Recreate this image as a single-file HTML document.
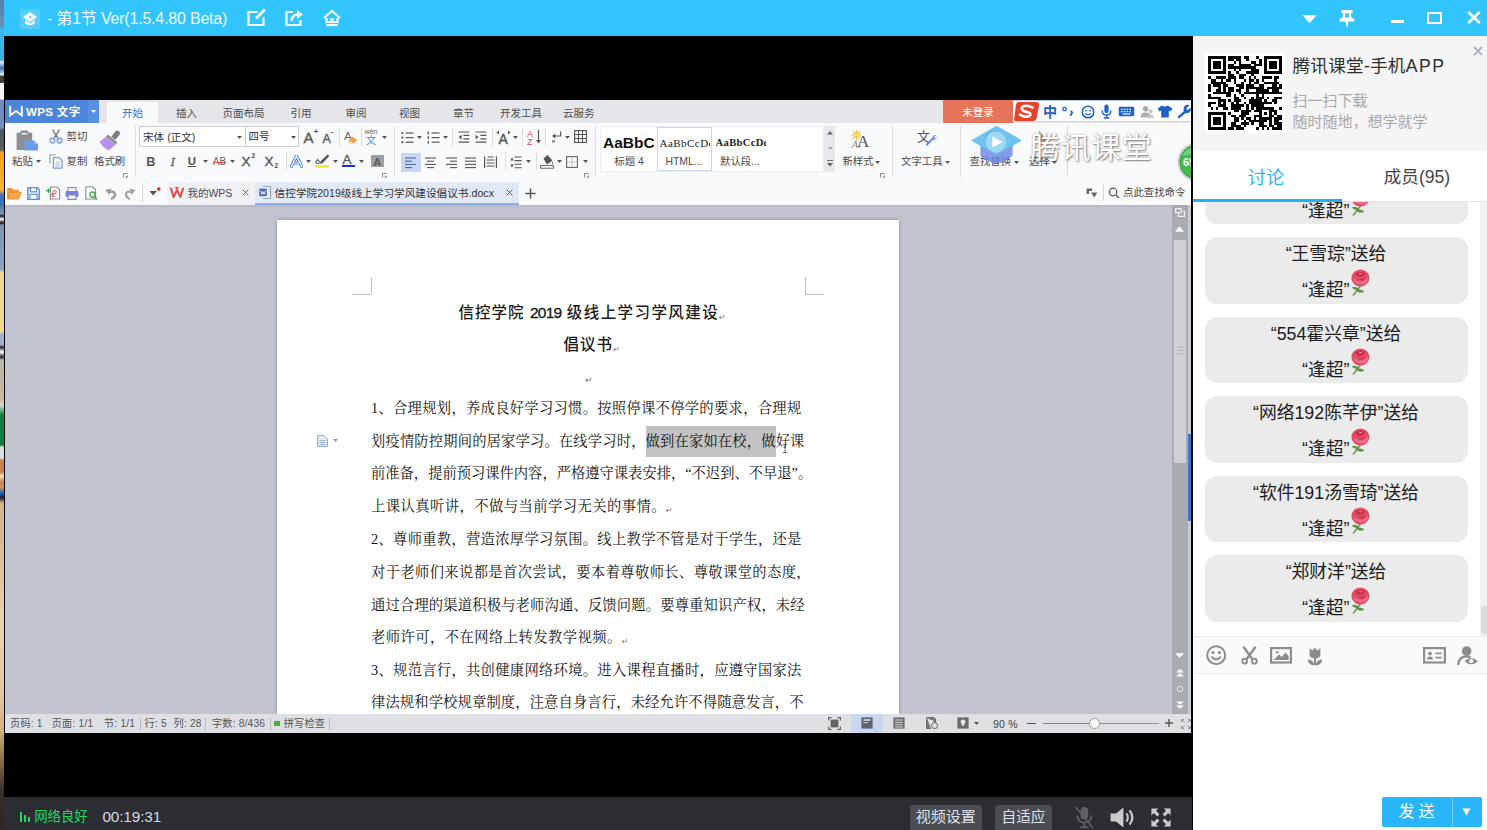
<!DOCTYPE html>
<html lang="zh-CN">
<head>
<meta charset="utf-8">
<title>腾讯课堂</title>
<style>
*{box-sizing:border-box;margin:0;padding:0}
html,body{width:1487px;height:830px;overflow:hidden;background:#000}
body{font-family:"Liberation Sans","Noto Sans CJK SC",sans-serif;position:relative;color:#333}
.abs{position:absolute}
#app{position:absolute;left:0;top:0;width:1487px;height:830px;overflow:hidden;background:#000}
/* left desktop sliver */
#sliver{left:0;top:0;width:4px;height:830px;background:linear-gradient(to bottom,
 #5b7ea8 0,#6a8fb8 27px,#36b8ee 28px,#36b4ea 60px,#e8eef6 62px,#3b6fb8 68px,#e8eef6 75px,#3a3f38 76px,#3a3f38 83px,#f4f4f4 83px,#f4f4f4 99px,
 #6f8fc4 100px,#6f8fc4 128px,#4a5560 130px,#59605f 150px,#f2a21a 152px,#f6b32a 190px,#3a72c0 195px,#3a72c0 205px,#5f7ea8 207px,#7c93b4 214px,#111 216px,#fff 219px,#111 223px,#7c93b4 225px,
 #8ea4c4 270px,#f0d98a 272px,#f0d98a 332px,#9fb0cc 334px,#9fb0cc 345px,#223 347px,#fff 352px,#223 357px,#b9b5b0 360px,#cdb89a 400px,#d9d9d9 405px,#0d7f45 415px,#0d7f45 445px,#ddd 447px,#ddd 458px,#c9824a 460px,#c9824a 472px,#f3e2c0 476px,#c9824a 482px,#c8905a 488px,#1d6fd0 492px,#223 498px,#d7b48a 503px,
 #d9bf98 560px,#e8d3ae 620px,#e2c9a2 690px,#d2b184 730px,#8a6d4c 760px,#3a3028 790px,#2a2622 830px)}
/* top bar */
#topbar{left:4px;top:0;width:1483px;height:36px;background:#31c5fb}
/* black video bg */
#stage{left:4px;top:36px;width:1188px;height:761px;background:#000}
#ctrl{left:4px;top:797px;width:1187.5px;height:33px;background:#2b2d33}
/* right panel */
#side{left:1192.5px;top:36px;width:294.5px;height:794px;background:#fff}
/* wps */
#wps{left:5px;top:100px;width:1186px;height:633px;background:#c3c5cf;overflow:hidden}

#msgs{left:0;top:165px;width:294px;height:436px;overflow:hidden}
.msg{position:absolute;left:12px;width:263px;height:66.5px;background:#ebebeb;border-radius:12px;text-align:center;font-size:17.8px;color:#1c1c1c;white-space:nowrap}
.msg .l1{position:absolute;left:0;width:100%;top:4px;line-height:26px}
.msg .l2{position:absolute;left:0;width:100%;top:40px;line-height:26px}
.rose{display:inline-block;vertical-align:top;margin-top:-8.4px;margin-left:0.5px}

.ttl{font-family:"Liberation Sans","Noto Sans CJK SC",sans-serif;font-weight:500;font-size:15.5px;line-height:24px;color:#1a1a1a;white-space:nowrap;letter-spacing:1.05px}
.ttl .dg{font-weight:400;letter-spacing:-0.75px;-webkit-text-stroke:0.35px #1a1a1a}
.dl{font-family:"Liberation Serif","Noto Serif CJK SC",serif;font-size:14.3px;line-height:24px;color:#151515;white-space:nowrap}
.pm{font-family:"DejaVu Sans",sans-serif;font-size:8px;color:#777;font-weight:normal;vertical-align:-2px;letter-spacing:0;display:inline-block;width:0}
</style>
</head>
<body>
<div id="app">
<div id="sliver" class="abs"></div>
<div id="topbar" class="abs">
<div class="abs" style="left:16px;top:9px;width:20px;height:20px;background:#55cdf8"></div>
<svg class="abs" style="left:17px;top:10px" width="18" height="18" viewBox="0 0 18 18"><path d="M9 2 L16 7 L9 12 L2 7Z" fill="#fff"/><path d="M4.2 10 L9 13.6 L13.8 10 L13.8 13.2 Q9 17.5 4.2 13.2Z" fill="#fff"/><path d="M9 5.2 Q11.2 7 9 8.8 Q7.6 7 9 5.2Z" fill="#31c5fb"/></svg>
<div class="abs" style="left:43px;top:8px;font-size:16px;line-height:22px;color:#eefaff;white-space:nowrap;letter-spacing:-0.2px">- 第1节 Ver(1.5.4.80 Beta)</div>
<svg class="abs" style="left:242px;top:8px" width="22" height="20" viewBox="0 0 22 20" fill="none" stroke="#f2fbff" stroke-width="2.2"><path d="M12 4 H2.5 V17 H17.5 V9"/><path d="M19 1.5 L10 10.5" stroke-width="2.8"/></svg>
<svg class="abs" style="left:280px;top:8px" width="22" height="20" viewBox="0 0 22 20" fill="none" stroke="#f2fbff" stroke-width="2.2"><path d="M9 4 H2.5 V17 H16.5 V12"/><path d="M7.5 13 Q8 6.5 14 6.5" stroke-width="2.4"/><path d="M13 2 L19 6.5 L13 11Z" fill="#f2fbff" stroke="none"/></svg>
<svg class="abs" style="left:318px;top:8px" width="22" height="20" viewBox="0 0 22 20" fill="none" stroke="#f2fbff" stroke-width="2.2"><path d="M2 10 L10 3 L18 10"/><path d="M4.5 10 V14 H15.5 V10"/><path d="M4 17 H16" /><path d="M8 11.5 H12"/></svg>
<svg class="abs" style="left:1298px;top:15px" width="15" height="9" viewBox="0 0 15 9"><path d="M0.5 0.3 H14.5 L7.5 8.2Z" fill="#fff"/></svg>
<svg class="abs" style="left:1335px;top:9px" width="16" height="20" viewBox="0 0 16 20" fill="#fff"><path d="M2.4 1 H13.6 V4 H12 L12.4 8.6 L15.4 10 V12.6 H9.4 L8 19.4 L6.6 12.6 H0.6 V10 L3.6 8.6 L4 4 H2.4Z"/><path d="M6.4 4.2 H9.6 L10 8.6 H6Z" fill="#31c5fb"/></svg>
<div class="abs" style="left:1386.5px;top:20.2px;width:13px;height:3.3px;background:#fff"></div>
<div class="abs" style="left:1423px;top:12px;width:15px;height:12px;border:2.5px solid #fff"></div>
<svg class="abs" style="left:1463px;top:11px" width="14" height="13" viewBox="0 0 14 13" stroke="#fff" stroke-width="2.6" fill="none"><path d="M1.2 1 L12.8 12 M12.8 1 L1.2 12"/></svg>
</div>
<div id="stage" class="abs"></div>
<div id="wps" class="abs">
<!--DOC-->
<div class="abs" style="left:0px;top:105px;width:1186px;height:509px;background:#c2c5cf"></div>
<div class="abs" style="left:0px;top:105px;width:1186px;height:3px;background:linear-gradient(#b4b7c2,#c2c5cf)"></div>
<div class="abs" style="left:272px;top:119.5px;width:622px;height:495px;background:#fff;box-shadow:0 0 4px rgba(90,95,110,0.55)"></div>
<div class="abs" style="left:347.3px;top:193.6px;width:19px;height:1px;background:#bdbdbd"></div>
<div class="abs" style="left:365.6px;top:176.8px;width:1px;height:17.6px;background:#bdbdbd"></div>
<div class="abs" style="left:800px;top:193.6px;width:19px;height:1px;background:#bdbdbd"></div>
<div class="abs" style="left:800px;top:176.8px;width:1px;height:17.6px;background:#bdbdbd"></div>
<div class="abs" style="left:641.2px;top:326.3px;width:129.5px;height:31.2px;background:#c3c3c3"></div>
<div class="abs ttl" style="left:453.4px;top:200.8px">信控学院 <span class="dg">2019</span> <span style="letter-spacing:1.42px">级线上学习学风建设</span><span class="pm">↵</span></div>
<div class="abs ttl" style="left:558.5px;top:232.7px">倡议书<span class="pm">↵</span></div>
<div class="abs" style="left:580px;top:272px;font-size:9px;line-height:16px;color:#777">↵</div>
<div class="abs dl" style="left:366.0px;top:296px;letter-spacing:0.291px">1、合理规划，养成良好学习习惯。按照停课不停学的要求，合理规</div>
<div class="abs dl" style="left:366.0px;top:329px;letter-spacing:0.155px">划疫情防控期间的居家学习。在线学习时，做到在家如在校，做好课</div>
<div class="abs dl" style="left:366.0px;top:361px;letter-spacing:-0.013px">前准备，提前预习课件内容，严格遵守课表安排，“不迟到、不早退”。</div>
<div class="abs dl" style="left:366.0px;top:394px;letter-spacing:0.45px">上课认真听讲，不做与当前学习无关的事情。<span class="pm">↵</span></div>
<div class="abs dl" style="left:366.0px;top:427.3px;letter-spacing:0.298px">2、尊师重教，营造浓厚学习氛围。线上教学不管是对于学生，还是</div>
<div class="abs dl" style="left:366.0px;top:460.4px;letter-spacing:0.369px">对于老师们来说都是首次尝试，要本着尊敬师长、尊敬课堂的态度，</div>
<div class="abs dl" style="left:366.0px;top:492.8px;letter-spacing:0.162px">通过合理的渠道积极与老师沟通、反馈问题。要尊重知识产权，未经</div>
<div class="abs dl" style="left:366.0px;top:524.8px;letter-spacing:0.45px">老师许可，不在网络上转发教学视频。<span class="pm">↵</span></div>
<div class="abs dl" style="left:366.0px;top:558px;letter-spacing:0.298px">3、规范言行，共创健康网络环境。进入课程直播时，应遵守国家法</div>
<div class="abs dl" style="left:366.0px;top:590.3px;letter-spacing:0.127px">律法规和学校规章制度，注意自身言行，未经允许不得随意发言，不</div>
<svg class="abs" style="left:312px;top:334.6px" width="11" height="12" viewBox="0 0 11 12"><path d="M0.6 0.6 H7 L10.4 4 V11.4 H0.6Z" fill="#e8eef8" stroke="#8fa4cc" stroke-width="1"/><path d="M2.4 5.4 H8.4 M2.4 7.4 H8.4 M2.4 9.4 H8.4" stroke="#8fa4cc" stroke-width="0.9"/></svg>
<svg class="abs" style="left:328px;top:339.4px" width="5" height="3" viewBox="0 0 5 3"><path d="M0 0 H5 L2.5 3Z" fill="#999"/></svg>
<svg class="abs" style="left:777px;top:343.6px" width="6" height="9" viewBox="0 0 6 9"><path d="M1 0.5 H5 M3 0.5 V8.5 M1 8.5 H5" stroke="#555" stroke-width="0.9" fill="none"/></svg>
<div class="abs" style="left:1167.2px;top:105px;width:15.8px;height:509px;background:#a9abb3"></div>
<div class="abs" style="left:1183px;top:105px;width:3px;height:509px;background:#c9cbd3"></div>
<div class="abs" style="left:1183px;top:333.6px;width:3px;height:87.2px;background:#3d78d0"></div>
<div class="abs" style="left:1169.3px;top:139.8px;width:11.8px;height:223.2px;background:#d0d1d6"></div>
<svg class="abs" style="left:1171.6px;top:245.6px" width="7" height="9" viewBox="0 0 7 9"><path d="M0 1 H7 M0 4.4 H7 M0 7.8 H7" stroke="#b2b4bc" stroke-width="1"/></svg>
<svg class="abs" style="left:1169.6px;top:108px" width="10" height="9" viewBox="0 0 10 9"><path d="M0.6 0.6 H6 V4.6 H0.6Z M6 3 H9.4 V8.4 H3.4 V4.6" fill="none" stroke="#eee" stroke-width="1.2"/></svg>
<svg class="abs" style="left:1170.4px;top:126px" width="9" height="6" viewBox="0 0 9 6"><path d="M0 5.8 H9 L4.5 0.2Z" fill="#fff"/></svg>
<svg class="abs" style="left:1170.4px;top:553.4px" width="9" height="5" viewBox="0 0 9 5"><path d="M0 0.2 H9 L4.5 4.8Z" fill="#fff"/></svg>
<svg class="abs" style="left:1171px;top:568.6px" width="8" height="8" viewBox="0 0 8 8"><path d="M0 3.4 H8 L4 0Z M0 7.4 H8 L4 4Z" fill="#fff"/></svg>
<svg class="abs" style="left:1171px;top:585px" width="8" height="8" viewBox="0 0 8 8"><circle cx="4" cy="4" r="2.8" fill="none" stroke="#f2f2f2" stroke-width="0.9"/></svg>
<svg class="abs" style="left:1171px;top:601px" width="8" height="8" viewBox="0 0 8 8"><path d="M0 0.4 H8 L4 3.8Z M0 4.4 H8 L4 7.8Z" fill="#fff"/></svg>
<div class="abs" style="left:0px;top:613.7px;width:1186px;height:19.3px;background:#dfe0e4"></div>
<div class="abs" style="left:5px;top:616.4px;font-size:10.2px;line-height:16px;color:#555;white-space:nowrap;letter-spacing:0.2px;">页码: 1</div>
<div class="abs" style="left:46.7px;top:616.4px;font-size:10.2px;line-height:16px;color:#555;white-space:nowrap;letter-spacing:0.2px;">页面: 1/1</div>
<div class="abs" style="left:99px;top:616.4px;font-size:10.2px;line-height:16px;color:#555;white-space:nowrap;letter-spacing:0.2px;">节: 1/1</div>
<div class="abs" style="left:139.5px;top:616.4px;font-size:10.2px;line-height:16px;color:#555;white-space:nowrap;letter-spacing:0.2px;">行: 5</div>
<div class="abs" style="left:168.5px;top:616.4px;font-size:10.2px;line-height:16px;color:#555;white-space:nowrap;letter-spacing:0.2px;">列: 28</div>
<div class="abs" style="left:206.9px;top:616.4px;font-size:10.2px;line-height:16px;color:#555;white-space:nowrap;letter-spacing:0.2px;">字数: 8/436</div>
<div class="abs" style="left:278.7px;top:616.4px;font-size:10.2px;line-height:16px;color:#555;white-space:nowrap;letter-spacing:0.2px;">拼写检查</div>
<div class="abs" style="left:135px;top:617.6px;width:1px;height:12px;background:#b8bac0"></div>
<div class="abs" style="left:200.4px;top:617.6px;width:1px;height:12px;background:#b8bac0"></div>
<div class="abs" style="left:264.6px;top:617.6px;width:1px;height:12px;background:#b8bac0"></div>
<div class="abs" style="left:324px;top:617.6px;width:1px;height:12px;background:#b8bac0"></div>
<div class="abs" style="left:269.4px;top:620.6px;width:5.6px;height:5.6px;background:#4cae3e"></div>
<svg class="abs" style="left:823px;top:617px" width="13" height="13" viewBox="0 0 13 13"><path d="M0.6 3.6 V0.6 H3.6 M9.4 0.6 H12.4 V3.6 M12.4 9.4 V12.4 H9.4 M3.6 12.4 H0.6 V9.4" fill="none" stroke="#666" stroke-width="1.2"/><rect x="2.6" y="2.6" width="7.8" height="7.8" fill="#666"/></svg>
<div class="abs" style="left:846px;top:613.7px;width:32.4px;height:19.3px;background:#c9d8f0"></div>
<svg class="abs" style="left:856px;top:617.4px" width="12" height="12" viewBox="0 0 12 12"><rect x="0.4" y="0.4" width="11.2" height="11.2" fill="#5d6470"/><path d="M2.4 3 H9.6" stroke="#fff" stroke-width="1.2"/><path d="M2.4 5.6 H7" stroke="#c8ccd4" stroke-width="1"/></svg>
<svg class="abs" style="left:888.3px;top:617.4px" width="12" height="12" viewBox="0 0 12 12"><rect x="0.4" y="0.4" width="11.2" height="11.2" fill="#6b6b6b"/><path d="M2.2 3 H9.8 M2.2 5.4 H9.8 M2.2 7.8 H9.8 M2.2 10 H9.8" stroke="#e4e4e4" stroke-width="0.9"/></svg>
<svg class="abs" style="left:921px;top:617.4px" width="12" height="12" viewBox="0 0 12 12"><path d="M0.6 0.6 H8 L9.6 2.2 V6 M0.6 0.6 V11.4 H5" fill="#777" stroke="#666" stroke-width="1"/><path d="M2.4 3.4 H7.4" stroke="#e4e4e4" stroke-width="0.9"/><circle cx="8.6" cy="8.6" r="3" fill="#dfe0e4" stroke="#666" stroke-width="1"/></svg>
<svg class="abs" style="left:952.4px;top:617.4px" width="12" height="12" viewBox="0 0 12 12"><rect x="0.4" y="0.4" width="11.2" height="11.2" fill="#6b6b6b"/><path d="M6 2.4 Q8.6 2.6 8.4 5 Q8.2 6.4 7.2 7.2 V8.8 H4.8 V7.2 Q3.8 6.4 3.6 5 Q3.4 2.6 6 2.4Z" fill="#e8e8e8"/></svg>
<svg class="abs" style="left:968.6px;top:622.4px" width="5" height="3" viewBox="0 0 5 3"><path d="M0 0 H5 L2.5 3Z" fill="#555"/></svg>
<div class="abs" style="left:988px;top:616.2px;font-size:10.6px;line-height:16px;color:#444;white-space:nowrap;letter-spacing:0.2px;">90 %</div>
<div class="abs" style="left:1022.3px;top:622.8px;width:8.6px;height:1.4px;background:#555"></div>
<div class="abs" style="left:1038px;top:622.7px;width:52px;height:1.6px;background:#4b8ae6"></div>
<div class="abs" style="left:1090px;top:622.9px;width:64px;height:1.2px;background:#8e9097"></div>
<div class="abs" style="left:1084px;top:617.9px;width:11.2px;height:11.2px;background:#fdfdfd;border:1px solid #9a9ca4;border-radius:50%"></div>
<svg class="abs" style="left:1160px;top:619.4px" width="8" height="8" viewBox="0 0 8 8"><path d="M4 0 V8 M0 4 H8" stroke="#555" stroke-width="1.4"/></svg>
<svg class="abs" style="left:1176px;top:619px" width="10" height="10" viewBox="0 0 10 10"><path d="M0.6 3 V0.6 H3 M7 0.6 H9.4 V3 M9.4 7 V9.4 H7 M3 9.4 H0.6 V7 M1 1 L3.6 3.6 M9 1 L6.4 3.6 M9 9 L6.4 6.4 M1 9 L3.6 6.4" fill="none" stroke="#888" stroke-width="0.9"/></svg>
<!--/DOC-->
<!--CHROME-->
<div class="abs" style="left:0px;top:0px;width:1186px;height:22.5px;background:#e4e6ea"></div>
<div class="abs" style="left:0px;top:0px;width:94px;height:22.5px;background:#4c86dc"></div>
<div class="abs" style="left:83px;top:0px;width:11px;height:22.5px;background:#5a90e0"></div>
<svg class="abs" style="left:4px;top:5px" width="14" height="12" viewBox="0 0 14 12" ><path d="M1.2 1 L1.2 10.4 L7 6 L12.8 10.4 L12.8 1" fill="none" stroke="#fff" stroke-width="1.9" stroke-linejoin="miter"/></svg>
<div class="abs" style="left:21px;top:3.8px;font-size:11.6px;line-height:16px;color:#fff;white-space:nowrap;font-weight:bold;letter-spacing:0.3px;">WPS 文字</div>
<svg class="abs" style="left:86.0px;top:9.5px" width="5" height="3" viewBox="0 0 5 3" ><path d="M0 0 H5 L2.5 3Z" fill="#fff"/></svg>
<div class="abs" style="left:102px;top:1.5px;width:50.5px;height:21px;background:#f9fafb"></div>
<div class="abs" style="left:67.6px;top:4.8px;font-size:10.5px;line-height:16px;color:#2f6fd0;white-space:nowrap;;width:120px;text-align:center;">开始</div>
<div class="abs" style="left:121.6px;top:4.8px;font-size:10.5px;line-height:16px;color:#4d4d4d;white-space:nowrap;;width:120px;text-align:center;">插入</div>
<div class="abs" style="left:178.6px;top:4.8px;font-size:10.5px;line-height:16px;color:#4d4d4d;white-space:nowrap;;width:120px;text-align:center;">页面布局</div>
<div class="abs" style="left:236px;top:4.8px;font-size:10.5px;line-height:16px;color:#4d4d4d;white-space:nowrap;;width:120px;text-align:center;">引用</div>
<div class="abs" style="left:291px;top:4.8px;font-size:10.5px;line-height:16px;color:#4d4d4d;white-space:nowrap;;width:120px;text-align:center;">审阅</div>
<div class="abs" style="left:344.5px;top:4.8px;font-size:10.5px;line-height:16px;color:#4d4d4d;white-space:nowrap;;width:120px;text-align:center;">视图</div>
<div class="abs" style="left:398.6px;top:4.8px;font-size:10.5px;line-height:16px;color:#4d4d4d;white-space:nowrap;;width:120px;text-align:center;">章节</div>
<div class="abs" style="left:456px;top:4.8px;font-size:10.5px;line-height:16px;color:#4d4d4d;white-space:nowrap;;width:120px;text-align:center;">开发工具</div>
<div class="abs" style="left:513.8px;top:4.8px;font-size:10.5px;line-height:16px;color:#4d4d4d;white-space:nowrap;;width:120px;text-align:center;">云服务</div>
<div class="abs" style="left:938px;top:0px;width:70px;height:22.5px;background:#e5745a"></div>
<div class="abs" style="left:913px;top:4.3px;font-size:10.5px;line-height:16px;color:#fff;white-space:nowrap;;width:120px;text-align:center;">未登录</div>
<div class="abs" style="left:1007.5px;top:0px;width:178.5px;height:22px;background:#fdfdfd;border-top:1px solid #bcd0ea;border-bottom:1px solid #c9d3e2"></div>
<svg class="abs" style="left:1008.5px;top:0px" width="26" height="22" viewBox="0 0 26 22" ><path d="M4 2 H22 Q26 2 25 6 L22.6 18 Q22 21 18.6 21 H1.6 Q-0.6 21 0.4 17.6 L2 5 Q2.4 2 4 2Z" fill="#e8402a"/><path d="M18.6 7.6 Q13 4.4 8.8 6.6 Q6 8.8 9.6 11 L15 12.8 Q17.6 14 15.6 15.8 Q11.4 18 6 14.6" fill="none" stroke="#fff" stroke-width="2.6" stroke-linecap="round"/></svg>
<div class="abs" style="left:985px;top:3.8px;font-size:14px;line-height:16px;color:#1f62c6;white-space:nowrap;font-weight:bold;width:120px;text-align:center;">中</div>
<svg class="abs" style="left:1057px;top:6px" width="12" height="10" viewBox="0 0 12 10" ><circle cx="2.6" cy="3" r="1.7" fill="none" stroke="#1f62c6" stroke-width="1.3"/><path d="M8.4 5.4 Q10.6 5.4 9.8 7.6 L8.2 9.6" fill="none" stroke="#1f62c6" stroke-width="1.8"/></svg>
<svg class="abs" style="left:1075.5px;top:4.5px" width="14" height="14" viewBox="0 0 14 14" ><circle cx="7" cy="7" r="5.8" fill="none" stroke="#1f62c6" stroke-width="1.5"/><circle cx="4.9" cy="5.6" r="0.9" fill="#1f62c6"/><circle cx="9.1" cy="5.6" r="0.9" fill="#1f62c6"/><path d="M4.2 8.4 Q7 11.4 9.8 8.4" fill="none" stroke="#1f62c6" stroke-width="1.3"/></svg>
<svg class="abs" style="left:1096px;top:4px" width="11" height="15" viewBox="0 0 11 15" ><rect x="3.4" y="0.6" width="4.2" height="8.4" rx="2.1" fill="#1f62c6"/><path d="M1.2 6.4 Q1.2 11 5.5 11 Q9.8 11 9.8 6.4 M5.5 11 V13.6 M2.8 14 H8.2" fill="none" stroke="#1f62c6" stroke-width="1.4"/></svg>
<svg class="abs" style="left:1113px;top:6px" width="17" height="11" viewBox="0 0 17 11" ><rect x="0.8" y="0.8" width="15.4" height="9.4" rx="1.4" fill="#1f62c6"/><path d="M3 3.4 H14 M3 5.6 H14" stroke="#fff" stroke-width="1.1" stroke-dasharray="1.6 1.2"/><path d="M4.6 8 H12.4" stroke="#fff" stroke-width="1.1"/></svg>
<svg class="abs" style="left:1135px;top:4.5px" width="14" height="14" viewBox="0 0 14 14" ><circle cx="5.6" cy="3.8" r="2.8" fill="#a9adb3"/><path d="M0.6 12.6 Q0.6 7.4 5.6 7.4 Q10.4 7.4 10.4 12.6Z" fill="#a9adb3"/><circle cx="10.6" cy="6.6" r="2" fill="#c2c5ca"/><path d="M7.4 13 Q7.4 9.4 10.6 9.4 Q13.8 9.4 13.8 13Z" fill="#c2c5ca"/></svg>
<svg class="abs" style="left:1152px;top:5px" width="16" height="13" viewBox="0 0 16 13" ><path d="M5 0.6 Q8 2.8 11 0.6 L15.4 3.6 L13.4 6.6 L11.8 5.6 V12.4 H4.2 V5.6 L2.6 6.6 L0.6 3.6Z" fill="#1f62c6"/></svg>
<svg class="abs" style="left:1172px;top:4px" width="14" height="15" viewBox="0 0 14 15" ><path d="M12.6 1 Q8 -0.4 6.6 4 Q6.2 6 7 7 L1 12.4 Q0.2 14 2 14.6 L8.6 9 Q11.6 9.8 13.4 7.2 Q14.4 5.4 13.6 3.6 L11 6.2 L9.2 4.6 Z" fill="#1f62c6"/></svg>
<div class="abs" style="left:0px;top:22.5px;width:1186px;height:58px;background:#f9fafb"></div>
<div class="abs" style="left:0px;top:80.5px;width:1186px;height:24.5px;background:#f9fafb"></div>
<svg class="abs" style="left:10.5px;top:29.5px" width="23" height="21" viewBox="0 0 23 21" ><rect x="0.6" y="2.6" width="15.6" height="17.4" rx="1.2" fill="#8f8f8f"/><rect x="4.6" y="0.4" width="7.6" height="4.4" rx="1" fill="#8f8f8f"/><rect x="5.6" y="3" width="5.6" height="1.4" fill="#f9fafb"/><path d="M8.4 10.4 H18.6 L22 13.8 V20.6 H8.4Z" fill="#6b9ce8"/><path d="M18.6 10.4 V13.8 H22Z" fill="#c3d7f6"/></svg>
<div class="abs" style="left:7px;top:54.1px;font-size:10.4px;line-height:16px;color:#4a4a4a;white-space:nowrap;;">粘贴</div>
<svg class="abs" style="left:31.1px;top:60.1px" width="5" height="3" viewBox="0 0 5 3" ><path d="M0 0 H5 L2.5 3Z" fill="#555"/></svg>
<svg class="abs" style="left:43.5px;top:28.5px" width="14" height="15" viewBox="0 0 14 15" ><path d="M3.4 0.6 L9.4 10 M10.6 0.6 L4.6 10" stroke="#7c7c7c" stroke-width="1.5" fill="none"/><circle cx="3.4" cy="11.6" r="2.4" fill="none" stroke="#7a9be0" stroke-width="1.4"/><circle cx="10.6" cy="11.6" r="2.4" fill="none" stroke="#7a9be0" stroke-width="1.4"/></svg>
<div class="abs" style="left:61.6px;top:29.1px;font-size:10.4px;line-height:16px;color:#4a4a4a;white-space:nowrap;;">剪切</div>
<svg class="abs" style="left:43.5px;top:53.5px" width="14" height="15" viewBox="0 0 14 15" ><path d="M1 9.6 V1 H7" fill="none" stroke="#9a9a9a" stroke-width="1.2"/><path d="M4.4 3.6 H10 L13 6.6 V14.2 H4.4Z" fill="#fff" stroke="#6b9ce8" stroke-width="1.2"/><path d="M6.4 8 H11 M6.4 10 H11 M6.4 12 H11" stroke="#8fb3ee" stroke-width="0.9"/></svg>
<div class="abs" style="left:61.6px;top:54.1px;font-size:10.4px;line-height:16px;color:#4a4a4a;white-space:nowrap;;">复制</div>
<svg class="abs" style="left:94px;top:29.5px" width="22" height="21" viewBox="0 0 22 21" ><path d="M12.4 6.4 L16.6 1.2 Q18.4 -0.2 20.2 1.4 Q21.8 3.2 20.4 5 L16.2 10Z" fill="#7d7d7d"/><path d="M9 4.4 L18.4 12.4 L16.4 14.6 L7 6.6Z" fill="#8c8c8c"/><path d="M7 6.8 L16.4 14.8 L9.8 20.6 Q3.8 17.6 0.4 11.8Z" fill="#b692ec"/></svg>
<div class="abs" style="left:89px;top:54.1px;font-size:10.4px;line-height:16px;color:#4a4a4a;white-space:nowrap;;">格式刷</div>
<svg class="abs" style="left:117.5px;top:73px" width="5" height="5" viewBox="0 0 5 5" ><path d="M0.5 4.5 V0.5 H4.5" fill="none" stroke="#8a8a8a" stroke-width="1"/><path d="M2 4.8 H4.8 V2Z" fill="#8a8a8a"/></svg>
<div class="abs" style="left:129.5px;top:26px;width:1px;height:51px;background:#dcdcdc"></div>
<div class="abs" style="left:134.2px;top:26.3px;width:106.6px;height:20.4px;background:#fff;border:1px solid #c9ccd2"></div>
<div class="abs" style="left:239.8px;top:26.3px;width:53.8px;height:20.4px;background:#fff;border:1px solid #c9ccd2"></div>
<div class="abs" style="left:138px;top:29.4px;font-size:10.6px;line-height:16px;color:#333;white-space:nowrap;;">宋体 (正文)</div>
<svg class="abs" style="left:232.0px;top:35.5px" width="5" height="3" viewBox="0 0 5 3" ><path d="M0 0 H5 L2.5 3Z" fill="#555"/></svg>
<div class="abs" style="left:243.5px;top:29.4px;font-size:10.4px;line-height:16px;color:#333;white-space:nowrap;;">四号</div>
<svg class="abs" style="left:285.5px;top:35.5px" width="5" height="3" viewBox="0 0 5 3" ><path d="M0 0 H5 L2.5 3Z" fill="#555"/></svg>
<div class="abs" style="left:298.6px;top:30.1px;font-size:15px;line-height:16px;color:#555;white-space:nowrap;-webkit-text-stroke:0.4px #555;">A</div>
<div class="abs" style="left:308.8px;top:24.4px;font-size:8px;line-height:16px;color:#555;white-space:nowrap;font-weight:bold;">+</div>
<div class="abs" style="left:317.4px;top:30.8px;font-size:12.5px;line-height:16px;color:#555;white-space:nowrap;-webkit-text-stroke:0.35px #555;">A</div>
<div class="abs" style="left:325.8px;top:24.0px;font-size:8px;line-height:16px;color:#555;white-space:nowrap;font-weight:bold;">-</div>
<div class="abs" style="left:334px;top:28px;width:1px;height:18px;background:#dcdcdc"></div>
<div class="abs" style="left:339px;top:28.3px;font-size:11.5px;line-height:16px;color:#666;white-space:nowrap;;">A</div>
<svg class="abs" style="left:343px;top:36px" width="10" height="8" viewBox="0 0 10 8" ><path d="M3.6 0.6 L9.4 3.6 L6 7.4 L0.6 4.4Z" fill="#f0a24a"/><path d="M0.6 4.4 L3.2 5.8 L2 7.4Z" fill="#fff" stroke="#f0a24a" stroke-width="0.6"/></svg>
<div class="abs" style="left:355.5px;top:28px;width:1px;height:18px;background:#dcdcdc"></div>
<div class="abs" style="left:359.6px;top:24.2px;font-size:7px;line-height:16px;color:#666;white-space:nowrap;;">wén</div>
<div class="abs" style="left:361px;top:33.3px;font-size:10px;line-height:16px;color:#4b82dc;white-space:nowrap;;">文</div>
<svg class="abs" style="left:376.5px;top:35.5px" width="5" height="3" viewBox="0 0 5 3" ><path d="M0 0 H5 L2.5 3Z" fill="#555"/></svg>
<div class="abs" style="left:388.6px;top:26px;width:1px;height:51px;background:#dcdcdc"></div>
<svg class="abs" style="left:395.5px;top:30.5px" width="13" height="14" viewBox="0 0 13 14" ><path d="M4.6 2.0 H12.6" stroke="#555" stroke-width="1.2"/><circle cx="1.4" cy="2.0" r="1.1" fill="#555"/><path d="M4.6 6.6 H12.6" stroke="#555" stroke-width="1.2"/><circle cx="1.4" cy="6.6" r="1.1" fill="#555"/><path d="M4.6 11.2 H12.6" stroke="#555" stroke-width="1.2"/><circle cx="1.4" cy="11.2" r="1.1" fill="#555"/></svg>
<svg class="abs" style="left:411.9px;top:35.5px" width="5" height="3" viewBox="0 0 5 3" ><path d="M0 0 H5 L2.5 3Z" fill="#555"/></svg>
<svg class="abs" style="left:421.6px;top:30.5px" width="13" height="14" viewBox="0 0 13 14" ><path d="M4.6 2.0 H12.6" stroke="#555" stroke-width="1.2"/><rect x="0.6" y="0.6000000000000001" width="1.4" height="2.8" fill="#555"/><path d="M4.6 6.6 H12.6" stroke="#555" stroke-width="1.2"/><rect x="0.6" y="5.199999999999999" width="1.4" height="2.8" fill="#555"/><path d="M4.6 11.2 H12.6" stroke="#555" stroke-width="1.2"/><rect x="0.6" y="9.799999999999999" width="1.4" height="2.8" fill="#555"/></svg>
<svg class="abs" style="left:438.3px;top:35.5px" width="5" height="3" viewBox="0 0 5 3" ><path d="M0 0 H5 L2.5 3Z" fill="#555"/></svg>
<div class="abs" style="left:447px;top:28px;width:1px;height:18px;background:#dcdcdc"></div>
<svg class="abs" style="left:452.8px;top:30.5px" width="12" height="13" viewBox="0 0 12 13" ><path d="M0.6 1 H11.4 M5.4 4.4 H11.4 M5.4 7.8 H11.4 M0.6 11.2 H11.4" stroke="#555" stroke-width="1.2"/><path d="M3.6 3.8 L0.6 6.1 L3.6 8.4Z" fill="#555"/></svg>
<svg class="abs" style="left:470px;top:30.5px" width="12" height="13" viewBox="0 0 12 13" ><path d="M0.6 1 H11.4 M5.4 4.4 H11.4 M5.4 7.8 H11.4 M0.6 11.2 H11.4" stroke="#555" stroke-width="1.2"/><path d="M0.6 3.8 L3.6 6.1 L0.6 8.4Z" fill="#555"/></svg>
<div class="abs" style="left:486.8px;top:28px;width:1px;height:18px;background:#dcdcdc"></div>
<div class="abs" style="left:493.4px;top:30.8px;font-size:14px;line-height:16px;color:#555;white-space:nowrap;-webkit-text-stroke:0.4px #555;">A</div>
<svg class="abs" style="left:491px;top:30px" width="15" height="5" viewBox="0 0 15 5" ><path d="M0.4 2.4 L3 0.4 V4.4Z M14.6 2.4 L12 0.4 V4.4Z" fill="#555"/></svg>
<svg class="abs" style="left:508.1px;top:35.5px" width="5" height="3" viewBox="0 0 5 3" ><path d="M0 0 H5 L2.5 3Z" fill="#555"/></svg>
<div class="abs" style="left:517.4px;top:28px;width:1px;height:18px;background:#dcdcdc"></div>
<div class="abs" style="left:522px;top:25.8px;font-size:9px;line-height:16px;color:#c8506a;white-space:nowrap;;">A</div>
<div class="abs" style="left:522px;top:34.3px;font-size:9px;line-height:16px;color:#c8506a;white-space:nowrap;;">Z</div>
<svg class="abs" style="left:530.6px;top:30px" width="5" height="14" viewBox="0 0 5 14" ><path d="M2.5 0 V12" stroke="#555" stroke-width="1.2"/><path d="M0 10 H5 L2.5 13.6Z" fill="#555"/></svg>
<div class="abs" style="left:539.7px;top:28px;width:1px;height:18px;background:#dcdcdc"></div>
<svg class="abs" style="left:545.6px;top:31px" width="11" height="12" viewBox="0 0 11 12" ><path d="M9.6 0.6 V5 H3" fill="none" stroke="#555" stroke-width="1.2"/><path d="M4.4 2.6 L1 5 L4.4 7.4Z" fill="#555"/><path d="M1 9.4 L4 11.4 M4 9.4 L1 11.4" stroke="#555" stroke-width="0.9"/></svg>
<svg class="abs" style="left:560.3px;top:35.5px" width="5" height="3" viewBox="0 0 5 3" ><path d="M0 0 H5 L2.5 3Z" fill="#555"/></svg>
<svg class="abs" style="left:569.4px;top:30.4px" width="13" height="13" viewBox="0 0 13 13" ><rect x="0.6" y="0.6" width="11.8" height="11.8" fill="none" stroke="#555" stroke-width="1.1"/><path d="M0.6 4.5 H12.4 M0.6 8.5 H12.4 M4.5 0.6 V12.4 M8.5 0.6 V12.4" stroke="#555" stroke-width="1"/></svg>
<div class="abs" style="left:590.4px;top:26px;width:1px;height:51px;background:#dcdcdc"></div>
<div class="abs" style="left:141.2px;top:53.6px;font-size:12.6px;line-height:16px;color:#555;white-space:nowrap;font-weight:bold;">B</div>
<div class="abs" style="left:165.6px;top:53.8px;font-size:13px;line-height:16px;color:#666;white-space:nowrap;font-style:italic;font-family:'Liberation Serif',serif;-webkit-text-stroke:0.3px #666;">I</div>
<div class="abs" style="left:182.8px;top:53.2px;font-size:11.5px;line-height:16px;color:#555;white-space:nowrap;font-weight:bold;text-decoration:underline;">U</div>
<svg class="abs" style="left:198.3px;top:60.1px" width="5" height="3" viewBox="0 0 5 3" ><path d="M0 0 H5 L2.5 3Z" fill="#555"/></svg>
<div class="abs" style="left:207.8px;top:53.8px;font-size:10px;line-height:16px;color:#666;white-space:nowrap;text-decoration:line-through;text-decoration-color:#d04a4a;">AB</div>
<svg class="abs" style="left:224.5px;top:60.1px" width="5" height="3" viewBox="0 0 5 3" ><path d="M0 0 H5 L2.5 3Z" fill="#555"/></svg>
<div class="abs" style="left:236.4px;top:54.4px;font-size:13.5px;line-height:16px;color:#555;white-space:nowrap;-webkit-text-stroke:0.4px #555;">X</div>
<div class="abs" style="left:246.4px;top:48.4px;font-size:6.5px;line-height:16px;color:#4a4a4a;white-space:nowrap;font-weight:bold;">2</div>
<div class="abs" style="left:259.6px;top:54.4px;font-size:13.5px;line-height:16px;color:#555;white-space:nowrap;-webkit-text-stroke:0.4px #555;">X</div>
<div class="abs" style="left:269.6px;top:57.8px;font-size:6.5px;line-height:16px;color:#4a4a4a;white-space:nowrap;font-weight:bold;">2</div>
<div class="abs" style="left:280.5px;top:52px;width:1px;height:18px;background:#dcdcdc"></div>
<svg class="abs" style="left:285px;top:54.5px" width="13" height="13" viewBox="0 0 13 13" ><path d="M1 12 L6.5 1 L12 12 M3.4 8 H9.6" fill="none" stroke="#4b82dc" stroke-width="3.2" stroke-linejoin="round" stroke-linecap="round"/><path d="M1 12 L6.5 1 L12 12 M3.4 8 H9.6" fill="none" stroke="#fff" stroke-width="1.2" stroke-linejoin="round" stroke-linecap="round"/></svg>
<svg class="abs" style="left:301.3px;top:60.1px" width="5" height="3" viewBox="0 0 5 3" ><path d="M0 0 H5 L2.5 3Z" fill="#555"/></svg>
<svg class="abs" style="left:310px;top:53.5px" width="15" height="14" viewBox="0 0 15 14" ><path d="M12.6 0.6 L14.2 2 L7.4 9.6 L5 9.8 L5.4 7.6Z" fill="#555"/><path d="M1 6.6 Q2.6 4 4.2 6.6 M1 6.8 H4.2 V9.6 H1Z" fill="none" stroke="#555" stroke-width="0.9"/><rect x="0.4" y="11" width="13.6" height="2.6" fill="#f4e531"/></svg>
<svg class="abs" style="left:327.5px;top:60.1px" width="5" height="3" viewBox="0 0 5 3" ><path d="M0 0 H5 L2.5 3Z" fill="#555"/></svg>
<div class="abs" style="left:337.6px;top:51.8px;font-size:13.4px;line-height:16px;color:#555;white-space:nowrap;-webkit-text-stroke:0.3px #555;">A</div>
<div class="abs" style="left:336.8px;top:65px;width:13px;height:2.4px;background:#1a2fd0"></div>
<svg class="abs" style="left:353.9px;top:60.1px" width="5" height="3" viewBox="0 0 5 3" ><path d="M0 0 H5 L2.5 3Z" fill="#555"/></svg>
<div class="abs" style="left:365.8px;top:55px;width:12.8px;height:12.4px;background:#a0a0a0"></div>
<div class="abs" style="left:368.2px;top:54.2px;font-size:11px;line-height:16px;color:#5a5a5a;white-space:nowrap;font-weight:bold;">A</div>
<svg class="abs" style="left:376.6px;top:73px" width="5" height="5" viewBox="0 0 5 5" ><path d="M0.5 4.5 V0.5 H4.5" fill="none" stroke="#8a8a8a" stroke-width="1"/><path d="M2 4.8 H4.8 V2Z" fill="#8a8a8a"/></svg>
<div class="abs" style="left:396px;top:53px;width:20px;height:18.8px;background:#c8d8f2"></div>
<svg class="abs" style="left:400.2px;top:56.6px" width="12" height="12" viewBox="0 0 12 12" ><path d="M0 1.0 H11" stroke="#4a6aa8" stroke-width="1.1"/><path d="M0 4.2 H7" stroke="#4a6aa8" stroke-width="1.1"/><path d="M0 7.4 H11" stroke="#4a6aa8" stroke-width="1.1"/><path d="M0 10.600000000000001 H7" stroke="#4a6aa8" stroke-width="1.1"/></svg>
<svg class="abs" style="left:420px;top:56.6px" width="12" height="12" viewBox="0 0 12 12" ><path d="M0 1.0 H11" stroke="#555" stroke-width="1.1"/><path d="M2 4.2 H9" stroke="#555" stroke-width="1.1"/><path d="M0 7.4 H11" stroke="#555" stroke-width="1.1"/><path d="M2 10.600000000000001 H9" stroke="#555" stroke-width="1.1"/></svg>
<svg class="abs" style="left:440.6px;top:56.6px" width="12" height="12" viewBox="0 0 12 12" ><path d="M0 1.0 H11" stroke="#555" stroke-width="1.1"/><path d="M4 4.2 H11" stroke="#555" stroke-width="1.1"/><path d="M0 7.4 H11" stroke="#555" stroke-width="1.1"/><path d="M4 10.600000000000001 H11" stroke="#555" stroke-width="1.1"/></svg>
<svg class="abs" style="left:459.8px;top:56.6px" width="12" height="12" viewBox="0 0 12 12" ><path d="M0 1.0 H11" stroke="#555" stroke-width="1.1"/><path d="M0 4.2 H11" stroke="#555" stroke-width="1.1"/><path d="M0 7.4 H11" stroke="#555" stroke-width="1.1"/><path d="M0 10.600000000000001 H11" stroke="#555" stroke-width="1.1"/></svg>
<svg class="abs" style="left:478.8px;top:55.6px" width="13" height="13" viewBox="0 0 13 13" ><path d="M0.6 0.6 V12 M12.4 0.6 V12" stroke="#555" stroke-width="1.2"/><path d="M2.6 4 H10.4 M2.6 7 H10.4 M2.6 10 H10.4" stroke="#555" stroke-width="1.1"/><path d="M3.6 1 H9.4" stroke="#555" stroke-width="1"/></svg>
<div class="abs" style="left:499.7px;top:52px;width:1px;height:18px;background:#dcdcdc"></div>
<svg class="abs" style="left:505px;top:55.6px" width="12" height="13" viewBox="0 0 12 13" ><path d="M4.6 1 H11.6 M4.6 4.6 H11.6 M4.6 8.2 H11.6 M4.6 11.8 H11.6" stroke="#555" stroke-width="1.1"/><path d="M0.2 4.4 L2 1.6 L3.8 4.4Z M0.2 8.6 L2 11.4 L3.8 8.6Z" fill="#555"/></svg>
<svg class="abs" style="left:521.3px;top:60.1px" width="5" height="3" viewBox="0 0 5 3" ><path d="M0 0 H5 L2.5 3Z" fill="#555"/></svg>
<div class="abs" style="left:530.6px;top:52px;width:1px;height:18px;background:#dcdcdc"></div>
<svg class="abs" style="left:534.6px;top:53.6px" width="14" height="15" viewBox="0 0 14 15" ><path d="M3.4 4.6 L7.6 1 L12.4 6.6 L7 10.6Z" fill="#555"/><path d="M12.6 7.6 Q14 10 12.6 10.6 Q11.2 10 12.6 7.6Z" fill="#555"/><rect x="0.6" y="11.6" width="12.8" height="2.6" fill="#fff" stroke="#555" stroke-width="0.9"/></svg>
<svg class="abs" style="left:551.5px;top:60.1px" width="5" height="3" viewBox="0 0 5 3" ><path d="M0 0 H5 L2.5 3Z" fill="#555"/></svg>
<svg class="abs" style="left:561px;top:55.6px" width="12" height="12" viewBox="0 0 12 12" ><rect x="0.6" y="0.6" width="10.8" height="10.8" fill="none" stroke="#666" stroke-width="1.1"/><path d="M6 0.6 V11.4 M0.6 6 H11.4" stroke="#999" stroke-width="0.9" stroke-dasharray="1.4 1"/></svg>
<svg class="abs" style="left:577.5px;top:60.1px" width="5" height="3" viewBox="0 0 5 3" ><path d="M0 0 H5 L2.5 3Z" fill="#555"/></svg>
<svg class="abs" style="left:578.6px;top:73px" width="5" height="5" viewBox="0 0 5 5" ><path d="M0.5 4.5 V0.5 H4.5" fill="none" stroke="#8a8a8a" stroke-width="1"/><path d="M2 4.8 H4.8 V2Z" fill="#8a8a8a"/></svg>
<div class="abs" style="left:595px;top:26px;width:224px;height:45.5px;background:#fff;border:1px solid #eceef2"></div>
<div class="abs" style="left:819px;top:26px;width:11px;height:45.5px;background:#e7e8eb"></div>
<div class="abs" style="left:598px;top:35.4px;font-size:15.5px;line-height:16px;color:#111;white-space:nowrap;font-weight:bold;width:51px;overflow:hidden;">AaBbC</div>
<div class="abs" style="left:564px;top:53.5px;font-size:10.4px;line-height:16px;color:#4a4a4a;white-space:nowrap;;width:120px;text-align:center;">标题 4</div>
<div class="abs" style="left:652px;top:27px;width:55px;height:44px;border:1.6px solid #c9d6f2;background:#fff"></div>
<div class="abs" style="left:654.6px;top:35.2px;font-size:11px;line-height:16px;color:#222;white-space:nowrap;font-family:'Liberation Serif',serif;width:50.5px;overflow:hidden;letter-spacing:0.45px;">AaBbCcDd</div>
<div class="abs" style="left:619px;top:53.5px;font-size:10.4px;line-height:16px;color:#4a4a4a;white-space:nowrap;;width:120px;text-align:center;">HTML...</div>
<div class="abs" style="left:710.6px;top:35.2px;font-size:10.6px;line-height:16px;color:#222;white-space:nowrap;font-weight:bold;font-family:'Liberation Serif',serif;width:50.5px;overflow:hidden;letter-spacing:0.3px;">AaBbCcDd</div>
<div class="abs" style="left:675px;top:53.5px;font-size:10.4px;line-height:16px;color:#4a4a4a;white-space:nowrap;;width:120px;text-align:center;">默认段...</div>
<svg class="abs" style="left:822px;top:31.4px" width="6" height="4" viewBox="0 0 6 4" ><path d="M0 3.6 H6 L3 0Z" fill="#666"/></svg>
<svg class="abs" style="left:822.6px;top:46.6px" width="5" height="3" viewBox="0 0 5 3" ><path d="M0 0 H5 L2.5 3Z" fill="#aaa"/></svg>
<svg class="abs" style="left:822px;top:59.6px" width="6" height="7" viewBox="0 0 6 7" ><path d="M0 0.6 H6" stroke="#666" stroke-width="1"/><path d="M0 3 H6 L3 6.6Z" fill="#666"/></svg>
<div class="abs" style="left:852px;top:33.8px;font-size:17px;line-height:16px;color:#555;white-space:nowrap;font-family:'Liberation Serif',serif;">A</div>
<div class="abs" style="left:846.6px;top:35.8px;font-size:11px;line-height:16px;color:#8a8a8a;white-space:nowrap;font-family:'Liberation Serif',serif;font-style:italic;">A</div>
<svg class="abs" style="left:845px;top:28.6px" width="13" height="12" viewBox="0 0 13 12" ><path d="M6.5 1 V11 M1.5 6 H11.5 M3 2.4 L10 9.6 M10 2.4 L3 9.6" stroke="#f0b82a" stroke-width="1.2"/><circle cx="6.5" cy="6" r="1.6" fill="#fde38a"/></svg>
<div class="abs" style="left:837.4px;top:53.5px;font-size:10.4px;line-height:16px;color:#4a4a4a;white-space:nowrap;;">新样式</div>
<svg class="abs" style="left:870.1px;top:60.5px" width="5" height="3" viewBox="0 0 5 3" ><path d="M0 0 H5 L2.5 3Z" fill="#555"/></svg>
<svg class="abs" style="left:875.4px;top:73px" width="5" height="5" viewBox="0 0 5 5" ><path d="M0.5 4.5 V0.5 H4.5" fill="none" stroke="#8a8a8a" stroke-width="1"/><path d="M2 4.8 H4.8 V2Z" fill="#8a8a8a"/></svg>
<div class="abs" style="left:886.5px;top:26px;width:1px;height:51px;background:#dcdcdc"></div>
<div class="abs" style="left:912px;top:29.4px;font-size:13px;line-height:16px;color:#555;white-space:nowrap;;">文</div>
<svg class="abs" style="left:920px;top:34px" width="13" height="13" viewBox="0 0 13 13" ><path d="M11.6 1 Q8 0.4 7.4 3.6 L1 10 Q0.4 11.6 2 12 L8.4 5.6 Q11.4 6 12.4 3 L10.4 4.4 L9 3Z" fill="#6a8fe0"/></svg>
<div class="abs" style="left:896px;top:53.5px;font-size:10.4px;line-height:16px;color:#4a4a4a;white-space:nowrap;;">文字工具</div>
<svg class="abs" style="left:940.1px;top:60.5px" width="5" height="3" viewBox="0 0 5 3" ><path d="M0 0 H5 L2.5 3Z" fill="#555"/></svg>
<div class="abs" style="left:955.4px;top:26px;width:1px;height:51px;background:#dcdcdc"></div>
<svg class="abs" style="left:979px;top:29px" width="22" height="22" viewBox="0 0 22 22" ><circle cx="9" cy="9" r="7" fill="#e9f0fb" stroke="#7a8fb8" stroke-width="1.6"/><path d="M14 14 L20.4 20.4" stroke="#7a8fb8" stroke-width="2.6"/><text x="5.6" y="12.4" font-size="9" fill="#5a6a8a" font-family="Liberation Sans,sans-serif">A</text></svg>
<div class="abs" style="left:964.5px;top:53.5px;font-size:10.4px;line-height:16px;color:#4a4a4a;white-space:nowrap;;">查找替换</div>
<svg class="abs" style="left:1008.9px;top:60.5px" width="5" height="3" viewBox="0 0 5 3" ><path d="M0 0 H5 L2.5 3Z" fill="#555"/></svg>
<svg class="abs" style="left:1032px;top:30px" width="12" height="20" viewBox="0 0 12 20" ><path d="M2 0.6 L2 17 L9.6 9.4Z" fill="#b9a08e"/></svg>
<div class="abs" style="left:1024px;top:53.5px;font-size:10.4px;line-height:16px;color:#4a4a4a;white-space:nowrap;;">选择</div>
<svg class="abs" style="left:1046.9px;top:60.5px" width="5" height="3" viewBox="0 0 5 3" ><path d="M0 0 H5 L2.5 3Z" fill="#555"/></svg>
<div class="abs" style="left:1062px;top:26px;width:1px;height:51px;background:#dcdcdc"></div>
<svg class="abs" style="left:965px;top:24.6px" width="53" height="44" viewBox="0 0 53 44" ><path d="M10.4 20 L26.5 29.6 L42.6 20 V30.6 Q26.5 46 10.4 30.6Z" fill="#7289e6" fill-opacity="0.85"/><path d="M26.5 0.8 L52 15.4 L26.5 30 L1 15.4Z" fill="#5cbcee" fill-opacity="0.9"/><circle cx="26" cy="17" r="10.4" fill="#a6dbf6" fill-opacity="0.9"/><path d="M22.4 11.4 L32.4 17 L22.4 22.6Z" fill="#fff"/></svg>
<div class="abs" style="left:1025.6px;top:37.0px;font-size:29.5px;line-height:16px;color:#ffffff;white-space:nowrap;font-weight:400;font-family:'Noto Sans CJK SC',sans-serif;text-shadow:1px 1.4px 1.6px rgba(70,70,70,0.6),0 0 2.5px rgba(110,110,110,0.55);letter-spacing:1px;">腾讯课堂</div>
<svg class="abs" style="left:1171px;top:42px" width="16" height="40" viewBox="0 0 16 40" ><circle cx="21" cy="20" r="19.6" fill="#cfd0d2"/><circle cx="21" cy="20" r="17.4" fill="#2f9a3c"/><circle cx="21" cy="20" r="16.4" fill="#43bd50"/><path d="M6 14 Q12 3.6 22 4 L22 12 Q12 12 6 14Z" fill="#8fe09a" fill-opacity="0.55"/><text x="7" y="24" font-size="11" font-weight="bold" fill="#fff" font-family="Liberation Sans,sans-serif">65</text></svg>
<svg class="abs" style="left:2px;top:86.5px" width="15" height="13" viewBox="0 0 15 13" ><path d="M0.6 12 V1.6 H5 L6.4 3.2 H11.6 V5" fill="#f39a35" stroke="#e8862a" stroke-width="0.8"/><path d="M0.6 12 L3.4 5.4 H14.4 L11.6 12Z" fill="#f6a94a" stroke="#e8862a" stroke-width="0.8"/></svg>
<svg class="abs" style="left:22.4px;top:86.5px" width="13" height="13" viewBox="0 0 13 13" ><path d="M0.8 0.8 H10.4 L12.2 2.6 V12.2 H0.8Z" fill="#eaf1fd" stroke="#5b8ee0" stroke-width="1.4"/><rect x="3.4" y="0.8" width="6" height="4" fill="#fff" stroke="#5b8ee0" stroke-width="1.1"/><rect x="2.8" y="7.4" width="7.4" height="4.8" fill="#fff" stroke="#5b8ee0" stroke-width="1.1"/></svg>
<svg class="abs" style="left:41px;top:86px" width="15" height="14" viewBox="0 0 15 14" ><path d="M4.4 1 H11 L13.6 3.6 V13 H4.4Z" fill="#fff" stroke="#8a8a8a" stroke-width="1.1"/><path d="M7 10.6 Q6 4.4 9.4 4.6 Q11.6 5.4 9.4 7.6 Q7.4 8.6 6 8 Q5.4 11.4 8.6 10.6" fill="none" stroke="#d8434a" stroke-width="1"/><path d="M0.2 4.6 H4.6 M2.4 2.4 V6.8" stroke="#3aa24a" stroke-width="1.4"/></svg>
<svg class="abs" style="left:60px;top:86.5px" width="14" height="13" viewBox="0 0 14 13" ><rect x="3" y="0.6" width="8" height="4" fill="#fff" stroke="#7b7fd0" stroke-width="1.1"/><rect x="0.6" y="4" width="12.8" height="6" rx="1" fill="#7b80d4"/><rect x="3" y="8" width="8" height="4.4" fill="#fff" stroke="#7b7fd0" stroke-width="1.1"/></svg>
<svg class="abs" style="left:79.6px;top:86px" width="13" height="14" viewBox="0 0 13 14" ><path d="M0.8 0.8 H7.6 L10.6 3.8 V13 H0.8Z" fill="#fff" stroke="#8a8a8a" stroke-width="1.1"/><circle cx="7.4" cy="8.6" r="2.6" fill="#fff" stroke="#4aa856" stroke-width="1.3"/><path d="M9.2 10.6 L12 13.4" stroke="#4aa856" stroke-width="1.6"/></svg>
<svg class="abs" style="left:99.6px;top:86.6px" width="12" height="13" viewBox="0 0 12 13" ><path d="M4 5 Q10 3.4 10 7.6 Q9.8 10.6 6 12" fill="none" stroke="#9a9a9a" stroke-width="2.3"/><path d="M0.2 3 L6.4 1.4 L4.6 8Z" fill="#9a9a9a"/></svg>
<svg class="abs" style="left:119px;top:86.6px" width="12" height="13" viewBox="0 0 12 13" ><path d="M8 5 Q2 3.4 2 7.6 Q2.2 10.6 6 12" fill="none" stroke="#a8a8a8" stroke-width="2.3"/><path d="M11.8 3 L5.6 1.4 L7.4 8Z" fill="#a8a8a8"/></svg>
<div class="abs" style="left:137px;top:84px;width:1px;height:18px;background:#d6d8dc"></div>
<svg class="abs" style="left:144px;top:86.6px" width="12" height="9" viewBox="0 0 12 9" ><path d="M0.4 4 H8 L4.2 8.4Z" fill="#555"/><circle cx="9.8" cy="2" r="1.8" fill="#e8202a"/></svg>
<div class="abs" style="left:161.8px;top:82px;width:87.8px;height:23px;background:#f0f1f4"></div>
<svg class="abs" style="left:165px;top:87px" width="14" height="11" viewBox="0 0 14 11" ><path d="M0.8 0.8 L3.6 10 L7 3 L10.4 10 L13.2 0.8" fill="none" stroke="#e8453c" stroke-width="1.9" stroke-linejoin="miter"/><path d="M5.2 0.8 H8.8" stroke="#e8453c" stroke-width="1.6"/></svg>
<div class="abs" style="left:182.4px;top:85.4px;font-size:10.5px;line-height:16px;color:#4a4a4a;white-space:nowrap;;">我的WPS</div>
<svg class="abs" style="left:236.6px;top:89px" width="7" height="7" viewBox="0 0 7 7" ><path d="M0.6 0.6 L6.4 6.4 M6.4 0.6 L0.6 6.4" stroke="#666" stroke-width="1"/></svg>
<div class="abs" style="left:249.6px;top:82px;width:264.2px;height:23px;background:#e2e9f5;border-bottom:2px solid #8fb0e6"></div>
<svg class="abs" style="left:254px;top:86px" width="13" height="13" viewBox="0 0 13 13" ><path d="M4 0.6 H11.6 V12.4 H4" fill="#fff" stroke="#8a92a8" stroke-width="1"/><rect x="0.4" y="2.6" width="7.4" height="7.6" fill="#3f63b8"/><path d="M1.8 4.4 L3 8.4 L4.1 5.6 L5.2 8.4 L6.4 4.4" fill="none" stroke="#fff" stroke-width="0.9"/><path d="M9.2 3.6 H10.4 M9.2 6 H10.4 M9.2 8.4 H10.4" stroke="#8a92a8" stroke-width="0.9"/></svg>
<div class="abs" style="left:269.6px;top:85.2px;font-size:10.65px;line-height:16px;color:#333;white-space:nowrap;;">信控学院2019级线上学习学风建设倡议书.docx</div>
<svg class="abs" style="left:501px;top:89px" width="7" height="7" viewBox="0 0 7 7" ><path d="M0.6 0.6 L6.4 6.4 M6.4 0.6 L0.6 6.4" stroke="#555" stroke-width="1"/></svg>
<svg class="abs" style="left:519.6px;top:87.6px" width="11" height="11" viewBox="0 0 11 11" ><path d="M5.5 0.4 V10.6 M0.4 5.5 H10.6" stroke="#555" stroke-width="1.5"/></svg>
<svg class="abs" style="left:1081px;top:88px" width="12" height="10" viewBox="0 0 12 10" ><path d="M0.6 0.6 H6 V3 H3 V6 H0.6Z" fill="#666"/><path d="M5 4.6 H11.4 L8.2 9.4Z" fill="#666"/></svg>
<div class="abs" style="left:1097.8px;top:85px;width:1px;height:16px;background:#cfd2d8"></div>
<svg class="abs" style="left:1103px;top:87.4px" width="12" height="12" viewBox="0 0 12 12" ><circle cx="5" cy="5" r="3.8" fill="none" stroke="#555" stroke-width="1.2"/><path d="M7.8 7.8 L11 11" stroke="#555" stroke-width="1.4"/></svg>
<div class="abs" style="left:1118px;top:85.4px;font-size:10.4px;line-height:16px;color:#444;white-space:nowrap;;">点此查找命令</div>
<!--/CHROME-->
</div>
<div id="ctrl" class="abs">
<div class="abs" style="left:15.7px;top:15px;width:2px;height:9.6px;background:#1ed760"></div>
<div class="abs" style="left:19.8px;top:18px;width:2px;height:6.6px;background:#1ed760"></div>
<div class="abs" style="left:24px;top:20.4px;width:2px;height:4.2px;background:#1ed760"></div>
<div class="abs" style="left:30.2px;top:9.5px;font-size:13.4px;line-height:20px;color:#1ed760;white-space:nowrap">网络良好</div>
<div class="abs" style="left:98.4px;top:9.5px;font-size:15.3px;line-height:20px;color:#d3dbe8;white-space:nowrap;letter-spacing:-0.1px">00:19:31</div>
<div class="abs" style="left:906px;top:7.7px;width:71.7px;height:26px;background:#4b4d53;border-radius:3px"></div>
<div class="abs" style="left:906px;top:9.8px;width:71.7px;text-align:center;font-size:15px;line-height:20px;color:#dce0ea;white-space:nowrap">视频设置</div>
<div class="abs" style="left:991.2px;top:7.7px;width:56.5px;height:26px;background:#4b4d53;border-radius:3px"></div>
<div class="abs" style="left:991.2px;top:9.8px;width:56.5px;text-align:center;font-size:14.6px;line-height:20px;color:#dce0ea;white-space:nowrap">自适应</div>
<svg class="abs" style="left:1070px;top:9px" width="21" height="23" viewBox="0 0 21 23"><rect x="6.6" y="1" width="7.6" height="12.6" rx="3.8" fill="#5d6067"/><path d="M3.4 9.6 Q3.4 16.6 10.4 16.6 Q17.4 16.6 17.4 9.6 M10.4 16.6 V20.6 M6.4 21.4 H14.4" fill="none" stroke="#5d6067" stroke-width="1.8"/><path d="M1.6 1 L19 22" stroke="#5d6067" stroke-width="1.5"/></svg>
<svg class="abs" style="left:1105.6px;top:10px" width="27" height="21" viewBox="0 0 27 21"><path d="M0.6 6.4 H6 L13.4 0.4 V20.6 L6 14.6 H0.6Z" fill="#cacaca"/><path d="M16.4 6.4 Q19.4 10.5 16.4 14.6" fill="none" stroke="#cacaca" stroke-width="2"/><path d="M19.6 3.4 Q25 10.5 19.6 17.6" fill="none" stroke="#cacaca" stroke-width="2.2"/></svg>
<svg class="abs" style="left:1146.6px;top:11px" width="20" height="19" viewBox="0 0 20 19" fill="#cacaca"><path d="M0.4 0.4 H7.4 L5 2.8 L8.4 6.2 L6.2 8.4 L2.8 5 L0.4 7.4Z"/><path d="M19.6 0.4 V7.4 L17.2 5 L13.8 8.4 L11.6 6.2 L15 2.8 L12.6 0.4Z"/><path d="M0.4 18.6 V11.6 L2.8 14 L6.2 10.6 L8.4 12.8 L5 16.2 L7.4 18.6Z"/><path d="M19.6 18.6 H12.6 L15 16.2 L11.6 12.8 L13.8 10.6 L17.2 14 L19.6 11.6Z"/></svg>
</div>
<div id="side" class="abs">
<div class="abs" style="left:0;top:0;width:294px;height:115px;background:#f5f5f5"></div>
<div class="abs" style="left:12px;top:17px;width:80px;height:80px;background:#fff"></div>
<svg class="abs" style="left:15px;top:20px" width="74" height="74" viewBox="0 0 29 29" shape-rendering="crispEdges"><path d="M0 0h7v1h-7zM8 0h5v1h-5zM14 0h2v1h-2zM19 0h1v1h-1zM22 0h7v1h-7zM0 1h1v1h-1zM6 1h1v1h-1zM8 1h2v1h-2zM11 1h2v1h-2zM15 1h1v1h-1zM20 1h1v1h-1zM22 1h1v1h-1zM28 1h1v1h-1zM0 2h1v1h-1zM2 2h3v1h-3zM6 2h1v1h-1zM10 2h1v1h-1zM12 2h1v1h-1zM17 2h2v1h-2zM20 2h1v1h-1zM22 2h1v1h-1zM24 2h3v1h-3zM28 2h1v1h-1zM0 3h1v1h-1zM2 3h3v1h-3zM6 3h1v1h-1zM8 3h2v1h-2zM12 3h5v1h-5zM18 3h3v1h-3zM22 3h1v1h-1zM24 3h3v1h-3zM28 3h1v1h-1zM0 4h1v1h-1zM2 4h3v1h-3zM6 4h1v1h-1zM8 4h11v1h-11zM22 4h1v1h-1zM24 4h3v1h-3zM28 4h1v1h-1zM0 5h1v1h-1zM6 5h1v1h-1zM10 5h1v1h-1zM12 5h1v1h-1zM17 5h3v1h-3zM22 5h1v1h-1zM28 5h1v1h-1zM0 6h7v1h-7zM8 6h1v1h-1zM11 6h1v1h-1zM15 6h5v1h-5zM22 6h7v1h-7zM8 7h2v1h-2zM12 7h3v1h-3zM17 7h1v1h-1zM0 8h1v1h-1zM3 8h4v1h-4zM8 8h3v1h-3zM12 8h2v1h-2zM16 8h1v1h-1zM18 8h1v1h-1zM21 8h4v1h-4zM26 8h2v1h-2zM1 9h2v1h-2zM5 9h1v1h-1zM7 9h2v1h-2zM10 9h1v1h-1zM14 9h1v1h-1zM16 9h2v1h-2zM19 9h1v1h-1zM21 9h1v1h-1zM26 9h1v1h-1zM1 10h6v1h-6zM10 10h1v1h-1zM13 10h1v1h-1zM16 10h1v1h-1zM18 10h2v1h-2zM22 10h6v1h-6zM0 11h1v1h-1zM2 11h3v1h-3zM6 11h2v1h-2zM11 11h3v1h-3zM15 11h3v1h-3zM20 11h2v1h-2zM25 11h2v1h-2zM28 11h1v1h-1zM0 12h1v1h-1zM4 12h1v1h-1zM6 12h1v1h-1zM8 12h2v1h-2zM12 12h2v1h-2zM15 12h7v1h-7zM23 12h6v1h-6zM0 13h1v1h-1zM3 13h2v1h-2zM6 13h1v1h-1zM8 13h2v1h-2zM11 13h2v1h-2zM15 13h1v1h-1zM19 13h5v1h-5zM25 13h3v1h-3zM2 14h7v1h-7zM12 14h1v1h-1zM14 14h15v1h-15zM0 15h1v1h-1zM7 15h2v1h-2zM10 15h1v1h-1zM13 15h1v1h-1zM19 15h1v1h-1zM21 15h1v1h-1zM0 16h5v1h-5zM10 16h2v1h-2zM14 16h1v1h-1zM17 16h1v1h-1zM19 16h3v1h-3zM23 16h1v1h-1zM26 16h3v1h-3zM4 17h3v1h-3zM8 17h1v1h-1zM10 17h3v1h-3zM16 17h5v1h-5zM22 17h1v1h-1zM25 17h2v1h-2zM0 18h3v1h-3zM4 18h1v1h-1zM6 18h1v1h-1zM9 18h1v1h-1zM11 18h1v1h-1zM14 18h1v1h-1zM16 18h9v1h-9zM26 18h1v1h-1zM0 19h1v1h-1zM4 19h3v1h-3zM9 19h5v1h-5zM15 19h1v1h-1zM17 19h5v1h-5zM1 20h1v1h-1zM3 20h1v1h-1zM6 20h2v1h-2zM9 20h4v1h-4zM15 20h1v1h-1zM17 20h1v1h-1zM19 20h7v1h-7zM28 20h1v1h-1zM10 21h2v1h-2zM13 21h4v1h-4zM18 21h3v1h-3zM24 21h3v1h-3zM0 22h7v1h-7zM8 22h1v1h-1zM13 22h3v1h-3zM20 22h1v1h-1zM22 22h1v1h-1zM24 22h1v1h-1zM26 22h1v1h-1zM0 23h1v1h-1zM6 23h1v1h-1zM9 23h2v1h-2zM12 23h3v1h-3zM18 23h3v1h-3zM24 23h2v1h-2zM27 23h2v1h-2zM0 24h1v1h-1zM2 24h3v1h-3zM6 24h1v1h-1zM10 24h2v1h-2zM13 24h1v1h-1zM15 24h2v1h-2zM18 24h1v1h-1zM20 24h5v1h-5zM26 24h3v1h-3zM0 25h1v1h-1zM2 25h3v1h-3zM6 25h1v1h-1zM10 25h2v1h-2zM14 25h1v1h-1zM16 25h7v1h-7zM24 25h1v1h-1zM26 25h2v1h-2zM0 26h1v1h-1zM2 26h3v1h-3zM6 26h1v1h-1zM9 26h2v1h-2zM13 26h3v1h-3zM17 26h1v1h-1zM20 26h2v1h-2zM24 26h1v1h-1zM26 26h3v1h-3zM0 27h1v1h-1zM6 27h1v1h-1zM9 27h4v1h-4zM14 27h1v1h-1zM20 27h3v1h-3zM24 27h2v1h-2zM27 27h2v1h-2zM0 28h7v1h-7zM8 28h2v1h-2zM11 28h3v1h-3zM19 28h1v1h-1zM21 28h1v1h-1zM23 28h1v1h-1zM25 28h4v1h-4z" fill="#000"/></svg>
<div class="abs" style="left:100px;top:18px;font-size:17.6px;line-height:24px;color:#2e2e2e;white-space:nowrap;letter-spacing:0.25px">腾讯课堂-手机<span style="letter-spacing:1.6px">APP</span></div>
<div class="abs" style="left:100px;top:54px;font-size:15px;line-height:21px;color:#a8a8a8;white-space:nowrap">扫一扫下载<br>随时随地，想学就学</div>
<svg class="abs" style="left:280px;top:10px" width="10" height="10" viewBox="0 0 10 10" stroke="#a9b4c0" stroke-width="2" fill="none"><path d="M1 1 L9 9 M9 1 L1 9"/></svg>
<div class="abs" style="left:0;top:115px;width:294px;height:48px;background:#fff"></div>
<div class="abs" style="left:0;top:129px;width:147px;text-align:center;font-size:18.4px;line-height:26px;color:#2fb4f6">讨论</div>
<div class="abs" style="left:148.5px;top:128px;width:152px;text-align:center;font-size:17.6px;line-height:26px;color:#444">成员(95)</div>
<div id="msgs" class="abs">
<div class="msg" style="top:-43.5px"><div class="l2">“逢超”<svg class="rose" width="20" height="28" viewBox="0 0 20 28"><path d="M10.5 17 L3 26.6" stroke="#6f9a4e" stroke-width="1.6" fill="none"/><path d="M8.8 19.4 Q5 16.8 1.8 18.2 Q4.2 22 8.2 20.8Z" fill="#5f9146"/><path d="M7.4 20.8 Q11.6 19.8 14.4 22.8 Q10.2 24.8 6.8 22.2Z" fill="#5f9146"/><path d="M9.8 17.4 L7.4 16.4 L12.6 16.6 Z" fill="#5f9146"/><ellipse cx="10.4" cy="9" rx="9" ry="8.6" fill="#e2506a"/><path d="M3 5 Q10 -1.5 17.4 4 Q19.4 8.6 17.6 13 Q12 19.4 5 15.4 Q0.8 10 3 5Z" fill="#e04a66"/><path d="M5.4 4.6 Q10 1.4 15 4.4 Q12.6 8.4 8.6 7.2 Q6 6.4 5.4 4.6Z" fill="#c8283f"/><path d="M8 4.6 Q10.4 3.2 12.8 4.6 Q11 6.6 8 4.6Z" fill="#f08a9a"/><path d="M3.4 8 Q6.6 13.4 12 12.4 Q16.4 11.4 17.8 7.4 Q18.6 12.4 15 15 Q9 16.4 4.6 13.4Z" fill="#ec6f86"/><path d="M9 9 Q12 11.4 15.6 8.6 Q14 12 10.4 11.4Z" fill="#c93048"/></svg></div></div>
<div class="msg" style="top:36.0px"><div class="l1">“王雪琮”送给</div><div class="l2">“逢超”<svg class="rose" width="20" height="28" viewBox="0 0 20 28"><path d="M10.5 17 L3 26.6" stroke="#6f9a4e" stroke-width="1.6" fill="none"/><path d="M8.8 19.4 Q5 16.8 1.8 18.2 Q4.2 22 8.2 20.8Z" fill="#5f9146"/><path d="M7.4 20.8 Q11.6 19.8 14.4 22.8 Q10.2 24.8 6.8 22.2Z" fill="#5f9146"/><path d="M9.8 17.4 L7.4 16.4 L12.6 16.6 Z" fill="#5f9146"/><ellipse cx="10.4" cy="9" rx="9" ry="8.6" fill="#e2506a"/><path d="M3 5 Q10 -1.5 17.4 4 Q19.4 8.6 17.6 13 Q12 19.4 5 15.4 Q0.8 10 3 5Z" fill="#e04a66"/><path d="M5.4 4.6 Q10 1.4 15 4.4 Q12.6 8.4 8.6 7.2 Q6 6.4 5.4 4.6Z" fill="#c8283f"/><path d="M8 4.6 Q10.4 3.2 12.8 4.6 Q11 6.6 8 4.6Z" fill="#f08a9a"/><path d="M3.4 8 Q6.6 13.4 12 12.4 Q16.4 11.4 17.8 7.4 Q18.6 12.4 15 15 Q9 16.4 4.6 13.4Z" fill="#ec6f86"/><path d="M9 9 Q12 11.4 15.6 8.6 Q14 12 10.4 11.4Z" fill="#c93048"/></svg></div></div>
<div class="msg" style="top:115.5px"><div class="l1">“554霍兴章”送给</div><div class="l2">“逢超”<svg class="rose" width="20" height="28" viewBox="0 0 20 28"><path d="M10.5 17 L3 26.6" stroke="#6f9a4e" stroke-width="1.6" fill="none"/><path d="M8.8 19.4 Q5 16.8 1.8 18.2 Q4.2 22 8.2 20.8Z" fill="#5f9146"/><path d="M7.4 20.8 Q11.6 19.8 14.4 22.8 Q10.2 24.8 6.8 22.2Z" fill="#5f9146"/><path d="M9.8 17.4 L7.4 16.4 L12.6 16.6 Z" fill="#5f9146"/><ellipse cx="10.4" cy="9" rx="9" ry="8.6" fill="#e2506a"/><path d="M3 5 Q10 -1.5 17.4 4 Q19.4 8.6 17.6 13 Q12 19.4 5 15.4 Q0.8 10 3 5Z" fill="#e04a66"/><path d="M5.4 4.6 Q10 1.4 15 4.4 Q12.6 8.4 8.6 7.2 Q6 6.4 5.4 4.6Z" fill="#c8283f"/><path d="M8 4.6 Q10.4 3.2 12.8 4.6 Q11 6.6 8 4.6Z" fill="#f08a9a"/><path d="M3.4 8 Q6.6 13.4 12 12.4 Q16.4 11.4 17.8 7.4 Q18.6 12.4 15 15 Q9 16.4 4.6 13.4Z" fill="#ec6f86"/><path d="M9 9 Q12 11.4 15.6 8.6 Q14 12 10.4 11.4Z" fill="#c93048"/></svg></div></div>
<div class="msg" style="top:195.0px"><div class="l1">“网络192陈芊伊”送给</div><div class="l2">“逢超”<svg class="rose" width="20" height="28" viewBox="0 0 20 28"><path d="M10.5 17 L3 26.6" stroke="#6f9a4e" stroke-width="1.6" fill="none"/><path d="M8.8 19.4 Q5 16.8 1.8 18.2 Q4.2 22 8.2 20.8Z" fill="#5f9146"/><path d="M7.4 20.8 Q11.6 19.8 14.4 22.8 Q10.2 24.8 6.8 22.2Z" fill="#5f9146"/><path d="M9.8 17.4 L7.4 16.4 L12.6 16.6 Z" fill="#5f9146"/><ellipse cx="10.4" cy="9" rx="9" ry="8.6" fill="#e2506a"/><path d="M3 5 Q10 -1.5 17.4 4 Q19.4 8.6 17.6 13 Q12 19.4 5 15.4 Q0.8 10 3 5Z" fill="#e04a66"/><path d="M5.4 4.6 Q10 1.4 15 4.4 Q12.6 8.4 8.6 7.2 Q6 6.4 5.4 4.6Z" fill="#c8283f"/><path d="M8 4.6 Q10.4 3.2 12.8 4.6 Q11 6.6 8 4.6Z" fill="#f08a9a"/><path d="M3.4 8 Q6.6 13.4 12 12.4 Q16.4 11.4 17.8 7.4 Q18.6 12.4 15 15 Q9 16.4 4.6 13.4Z" fill="#ec6f86"/><path d="M9 9 Q12 11.4 15.6 8.6 Q14 12 10.4 11.4Z" fill="#c93048"/></svg></div></div>
<div class="msg" style="top:274.5px"><div class="l1">“软件191汤雪琦”送给</div><div class="l2">“逢超”<svg class="rose" width="20" height="28" viewBox="0 0 20 28"><path d="M10.5 17 L3 26.6" stroke="#6f9a4e" stroke-width="1.6" fill="none"/><path d="M8.8 19.4 Q5 16.8 1.8 18.2 Q4.2 22 8.2 20.8Z" fill="#5f9146"/><path d="M7.4 20.8 Q11.6 19.8 14.4 22.8 Q10.2 24.8 6.8 22.2Z" fill="#5f9146"/><path d="M9.8 17.4 L7.4 16.4 L12.6 16.6 Z" fill="#5f9146"/><ellipse cx="10.4" cy="9" rx="9" ry="8.6" fill="#e2506a"/><path d="M3 5 Q10 -1.5 17.4 4 Q19.4 8.6 17.6 13 Q12 19.4 5 15.4 Q0.8 10 3 5Z" fill="#e04a66"/><path d="M5.4 4.6 Q10 1.4 15 4.4 Q12.6 8.4 8.6 7.2 Q6 6.4 5.4 4.6Z" fill="#c8283f"/><path d="M8 4.6 Q10.4 3.2 12.8 4.6 Q11 6.6 8 4.6Z" fill="#f08a9a"/><path d="M3.4 8 Q6.6 13.4 12 12.4 Q16.4 11.4 17.8 7.4 Q18.6 12.4 15 15 Q9 16.4 4.6 13.4Z" fill="#ec6f86"/><path d="M9 9 Q12 11.4 15.6 8.6 Q14 12 10.4 11.4Z" fill="#c93048"/></svg></div></div>
<div class="msg" style="top:354.0px"><div class="l1">“郑财洋”送给</div><div class="l2">“逢超”<svg class="rose" width="20" height="28" viewBox="0 0 20 28"><path d="M10.5 17 L3 26.6" stroke="#6f9a4e" stroke-width="1.6" fill="none"/><path d="M8.8 19.4 Q5 16.8 1.8 18.2 Q4.2 22 8.2 20.8Z" fill="#5f9146"/><path d="M7.4 20.8 Q11.6 19.8 14.4 22.8 Q10.2 24.8 6.8 22.2Z" fill="#5f9146"/><path d="M9.8 17.4 L7.4 16.4 L12.6 16.6 Z" fill="#5f9146"/><ellipse cx="10.4" cy="9" rx="9" ry="8.6" fill="#e2506a"/><path d="M3 5 Q10 -1.5 17.4 4 Q19.4 8.6 17.6 13 Q12 19.4 5 15.4 Q0.8 10 3 5Z" fill="#e04a66"/><path d="M5.4 4.6 Q10 1.4 15 4.4 Q12.6 8.4 8.6 7.2 Q6 6.4 5.4 4.6Z" fill="#c8283f"/><path d="M8 4.6 Q10.4 3.2 12.8 4.6 Q11 6.6 8 4.6Z" fill="#f08a9a"/><path d="M3.4 8 Q6.6 13.4 12 12.4 Q16.4 11.4 17.8 7.4 Q18.6 12.4 15 15 Q9 16.4 4.6 13.4Z" fill="#ec6f86"/><path d="M9 9 Q12 11.4 15.6 8.6 Q14 12 10.4 11.4Z" fill="#c93048"/></svg></div></div>
<div class="abs" style="left:287px;top:0;width:7px;height:436px;background:#f1f1f1"></div>
<div class="abs" style="left:288px;top:405px;width:6px;height:28px;background:#dcdcdc;border-radius:3px 0 0 3px"></div>
</div>
<div class="abs" style="left:0;top:164.6px;width:294px;height:1px;background:#e2e2e2"></div>
<div class="abs" style="left:0;top:163px;width:149.5px;height:3px;background:#1fb0f6"></div>
<div class="abs" style="left:0;top:600px;width:294px;height:37.5px;background:#fafafa;border-top:1px solid #ececec;border-bottom:1px solid #ececec"></div>
<div id="tools" class="abs" style="left:0;top:600px;width:294px;height:38px"><svg class="abs" style="left:13.4px;top:9.4px" width="21" height="21" viewBox="0 0 21 21"><circle cx="10.2" cy="10.2" r="9" fill="none" stroke="#8a8d90" stroke-width="2"/><circle cx="7" cy="7.6" r="1.5" fill="#8a8d90"/><circle cx="13.4" cy="7.6" r="1.5" fill="#8a8d90"/><path d="M5.4 11.6 Q10.2 17 15 11.6" fill="none" stroke="#8a8d90" stroke-width="1.9"/></svg><svg class="abs" style="left:48px;top:10px" width="17" height="19" viewBox="0 0 17 19"><path d="M2.4 0.8 L11.6 13.4 M14.6 0.8 L5.4 13.4" stroke="#8a8d90" stroke-width="2.4" fill="none"/><circle cx="3.6" cy="15.2" r="2.4" fill="none" stroke="#8a8d90" stroke-width="1.9"/><circle cx="13.4" cy="15.2" r="2.4" fill="none" stroke="#8a8d90" stroke-width="1.9"/></svg><svg class="abs" style="left:77.5px;top:11.2px" width="22" height="17" viewBox="0 0 22 17"><rect x="1.1" y="1.1" width="19.8" height="14.4" fill="none" stroke="#8a8d90" stroke-width="2.2"/><path d="M3.4 13 L9 7.4 L11.6 10 L15.6 5.4 L18.6 9 V13Z" fill="#8a8d90"/><circle cx="7.2" cy="5.2" r="1.3" fill="#8a8d90"/></svg><svg class="abs" style="left:114px;top:10.6px" width="16" height="19" viewBox="0 0 16 19"><path d="M2.6 1 L5.6 3.4 L8 0.4 L10.4 3.4 L13.4 1 V7.6 Q13.4 11.6 8 11.6 Q2.6 11.6 2.6 7.6Z" fill="#8a8d90"/><path d="M8 11 V18" stroke="#8a8d90" stroke-width="2"/><path d="M7.4 18.4 Q1.4 18.4 0.6 12.6 Q6.4 12.6 7.4 18.4Z M8.6 18.4 Q14.6 18.4 15.4 12.6 Q9.6 12.6 8.6 18.4Z" fill="#8a8d90"/></svg><svg class="abs" style="left:230.3px;top:11.2px" width="23" height="17" viewBox="0 0 23 17"><rect x="1.1" y="1.1" width="20.8" height="14.4" fill="none" stroke="#8a8d90" stroke-width="2.2"/><circle cx="7" cy="6.6" r="1.9" fill="#8a8d90"/><path d="M4 12.4 Q4 9.4 7 9.4 Q10 9.4 10 12.4Z" fill="#8a8d90"/><path d="M12.4 6.4 H18.6 M12.4 10.6 H18.6" stroke="#8a8d90" stroke-width="1.9"/></svg><svg class="abs" style="left:264px;top:9.6px" width="22" height="20" viewBox="0 0 22 20"><circle cx="9.6" cy="5" r="4.8" fill="#8a8d90"/><path d="M1.2 19 Q1.6 10.6 9.6 10.4 Q12 10.4 13.6 11.4" fill="none" stroke="#8a8d90" stroke-width="2.2"/><path d="M7.6 15.2 Q14 8.8 21 15.2 Q14 21.4 7.6 15.2Z" fill="#8a8d90"/><circle cx="14.3" cy="15.2" r="2.1" fill="#fafafa"/></svg></div>
<div class="abs" style="left:189px;top:761px;width:100px;height:30px;background:#29b6f8;border-radius:2px"></div>
<div class="abs" style="left:259px;top:761px;width:1px;height:30px;background:#6fd0fb"></div>
<div class="abs" style="left:189px;top:761px;width:70px;height:30px;line-height:30px;text-align:center;color:#fff;font-size:16px;letter-spacing:4px;padding-left:4px">发送</div>
<svg class="abs" style="left:269px;top:772px" width="9" height="8" viewBox="0 0 9 8"><path d="M0.5 0.5 H8.5 L4.5 7.5Z" fill="#fff"/></svg>
</div>
</div>
</body>
</html>
